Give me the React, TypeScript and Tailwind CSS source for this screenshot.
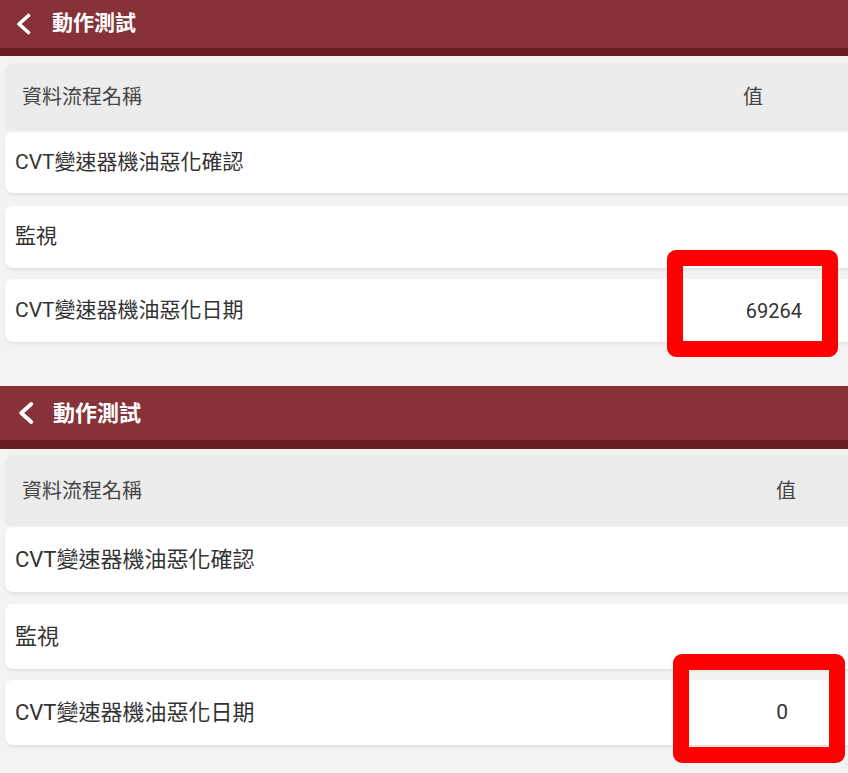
import React from 'react';

type Variant = {
  header: string;
  strip: string;
  chevron: string;
  title: string;
  body: string;
  head: string;
  headText: string;
  headValue: string;
  rows: string[];
  rowText: string;
  valueText: string;
  box: string;
  value: string;
};

const TOP: Variant = {
  header: 'h-[48px] pl-[15px]',
  strip: 'h-[8px]',
  chevron: 'w-[17px] h-[22px]',
  title: 'ml-[20px] text-[21px]',
  body: 'pt-[6px] pb-[44px]',
  head: 'h-[68px] pl-[17px] pr-[97px]',
  headText: 'text-[20px]',
  headValue: 'text-[20px]',
  rows: ['mt-[1px] h-[61px]', 'mt-[13px] h-[62px]', 'mt-[11px] h-[63px]'],
  rowText: 'text-[21px] pl-[10px] pr-[58px]',
  valueText: 'text-[20px]',
  box: 'left-[667px] top-[250px] w-[171px] h-[107px]',
  value: '69264',
};

const BOTTOM: Variant = {
  header: 'h-[54px] pl-[17px]',
  strip: 'h-[9px]',
  chevron: 'w-[18px] h-[24px]',
  title: 'ml-[18px] text-[22px]',
  body: 'pt-[5px] pb-[30px]',
  head: 'h-[71px] pl-[17px] pr-[64px]',
  headText: 'text-[20px]',
  headValue: 'text-[20px]',
  rows: ['mt-[1px] h-[65px]', 'mt-[12px] h-[65px]', 'mt-[11px] h-[65px]'],
  rowText: 'text-[22px] pl-[10px] pr-[72px]',
  valueText: 'text-[21px]',
  box: 'left-[673px] top-[268px] w-[172px] h-[109px]',
  value: '0',
};

const Chevron = ({ className }: { className: string }) => (
  <svg viewBox="0 0 17 22" className={className} fill="none">
    <polyline points="13.5,2.5 4,11 13.5,19.5" stroke="#fff" strokeWidth="3.6" strokeLinecap="round" strokeLinejoin="round" />
  </svg>
);

const Panel = ({ v }: { v: Variant }) => {
  const rows = ['CVT變速器機油惡化確認', '監視', 'CVT變速器機油惡化日期'];
  return (
    <section className="relative overflow-hidden">
      <div className={`flex items-center bg-[#863238] ${v.header}`}>
        <Chevron className={v.chevron} />
        <span className={`font-bold text-white ${v.title}`}>動作測試</span>
      </div>
      <div className={`bg-[#6a1e23] ${v.strip}`} />
      <div className={`bg-[#f3f3f3] pl-[5px] ${v.body}`}>
        <div className="mr-[-12px] border-t border-[#f9f1f3]" />
        <div className={`mr-[-12px] flex items-center justify-between rounded-t-lg bg-[#ececec] text-[#444] ${v.head}`}>
          <span className={v.headText}>資料流程名稱</span>
          <span className={v.headValue}>值</span>
        </div>
        {rows.map((label, i) => (
          <div
            key={label}
            className={`mr-[-12px] flex items-center justify-between rounded-lg bg-white text-[#333] shadow-[0_2px_3px_rgba(0,0,0,0.07)] ${v.rows[i]} ${v.rowText}`}
          >
            <span>{label}</span>
            {i === 2 && <span className={v.valueText}>{v.value}</span>}
          </div>
        ))}
      </div>
      <div className={`absolute rounded-[9px] border-[16px] border-[#ff0000] ${v.box}`} />
    </section>
  );
};

export default function App() {
  return (
    <div
      className="w-[848px] h-[773px] overflow-hidden bg-[#f3f3f3]"
      style={{ fontFamily: 'Roboto, "Noto Sans CJK TC", "Noto Sans", sans-serif' }}
    >
      <Panel v={TOP} />
      <Panel v={BOTTOM} />
    </div>
  );
}
